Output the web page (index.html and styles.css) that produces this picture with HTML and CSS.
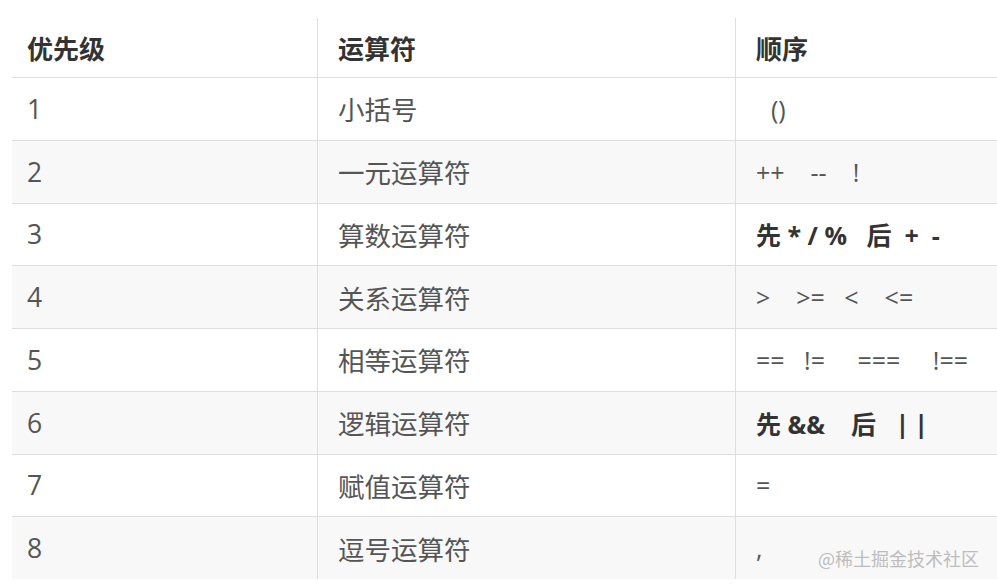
FILE: index.html
```html
<!DOCTYPE html>
<html lang="zh">
<head>
<meta charset="utf-8">
<title>运算符优先级</title>
<link rel="stylesheet" href="styles.css">
</head>
<body>
<div class="table">
  <div class="row head">
    <div class="cell">优先级</div>
    <div class="cell sep">运算符</div>
    <div class="cell sep">顺序</div>
  </div>
  <div class="row">
    <div class="cell">1</div>
    <div class="cell sep">小括号</div>
    <div class="cell sep op"><span class="paren">()</span></div>
  </div>
  <div class="row alt">
    <div class="cell">2</div>
    <div class="cell sep">一元运算符</div>
    <div class="cell sep op">++    --    !</div>
  </div>
  <div class="row">
    <div class="cell">3</div>
    <div class="cell sep">算数运算符</div>
    <div class="cell sep op strong">先 * / %   后  +  -</div>
  </div>
  <div class="row alt">
    <div class="cell">4</div>
    <div class="cell sep">关系运算符</div>
    <div class="cell sep op">&gt;    &gt;=   &lt;    &lt;=</div>
  </div>
  <div class="row">
    <div class="cell">5</div>
    <div class="cell sep">相等运算符</div>
    <div class="cell sep op">==   !=     ===     !==</div>
  </div>
  <div class="row alt">
    <div class="cell">6</div>
    <div class="cell sep">逻辑运算符</div>
    <div class="cell sep op strong">先 &amp;&amp;    后   <span class="bars">||</span></div>
  </div>
  <div class="row">
    <div class="cell">7</div>
    <div class="cell sep">赋值运算符</div>
    <div class="cell sep op">=</div>
  </div>
  <div class="row alt last">
    <div class="cell">8</div>
    <div class="cell sep">逗号运算符</div>
    <div class="cell sep op">,</div>
  </div>
  <div class="watermark">@稀土掘金技术社区</div>
</div>
</body>
</html>
```

FILE: styles.css
```css
html, body {
  margin: 0;
  padding: 0;
  background: #ffffff;
}

body {
  font-family: "Open Sans", "Noto Sans CJK SC", sans-serif;
  color: #555555;
  overflow: hidden;
}

.table {
  position: relative;
  margin: 18px 0 0 12px;
  width: 1000px;
}

.row {
  display: grid;
  grid-template-columns: 305px 418px 1fr;
  height: 62.75px;
  box-sizing: border-box;
  border-bottom: 1px solid #dedede;
}

.row.head {
  height: 60px;
}

.row.alt {
  background: #f8f8f8;
}

.row.last {
  border-bottom: none;
  height: 62px;
}

.cell {
  display: flex;
  align-items: center;
  padding-left: 15px;
  font-size: 26.5px;
  white-space: pre;
}

.cell.sep {
  border-left: 1px solid #dedede;
  padding-left: 20px;
}

.head .cell {
  font-weight: bold;
  color: #333333;
  font-size: 26px;
}

.op {
  font-size: 25px;
  color: #555555;
}

.op.strong {
  font-weight: bold;
  font-size: 25px;
  color: #333333;
}

.paren {
  padding-left: 15px;
}

.bars {
  letter-spacing: 5px;
}

.watermark {
  position: absolute;
  left: 806px;
  top: 527px;
  font-family: "Noto Sans CJK SC", sans-serif;
  font-size: 18px;
  color: #bdbdbd;
}
```
